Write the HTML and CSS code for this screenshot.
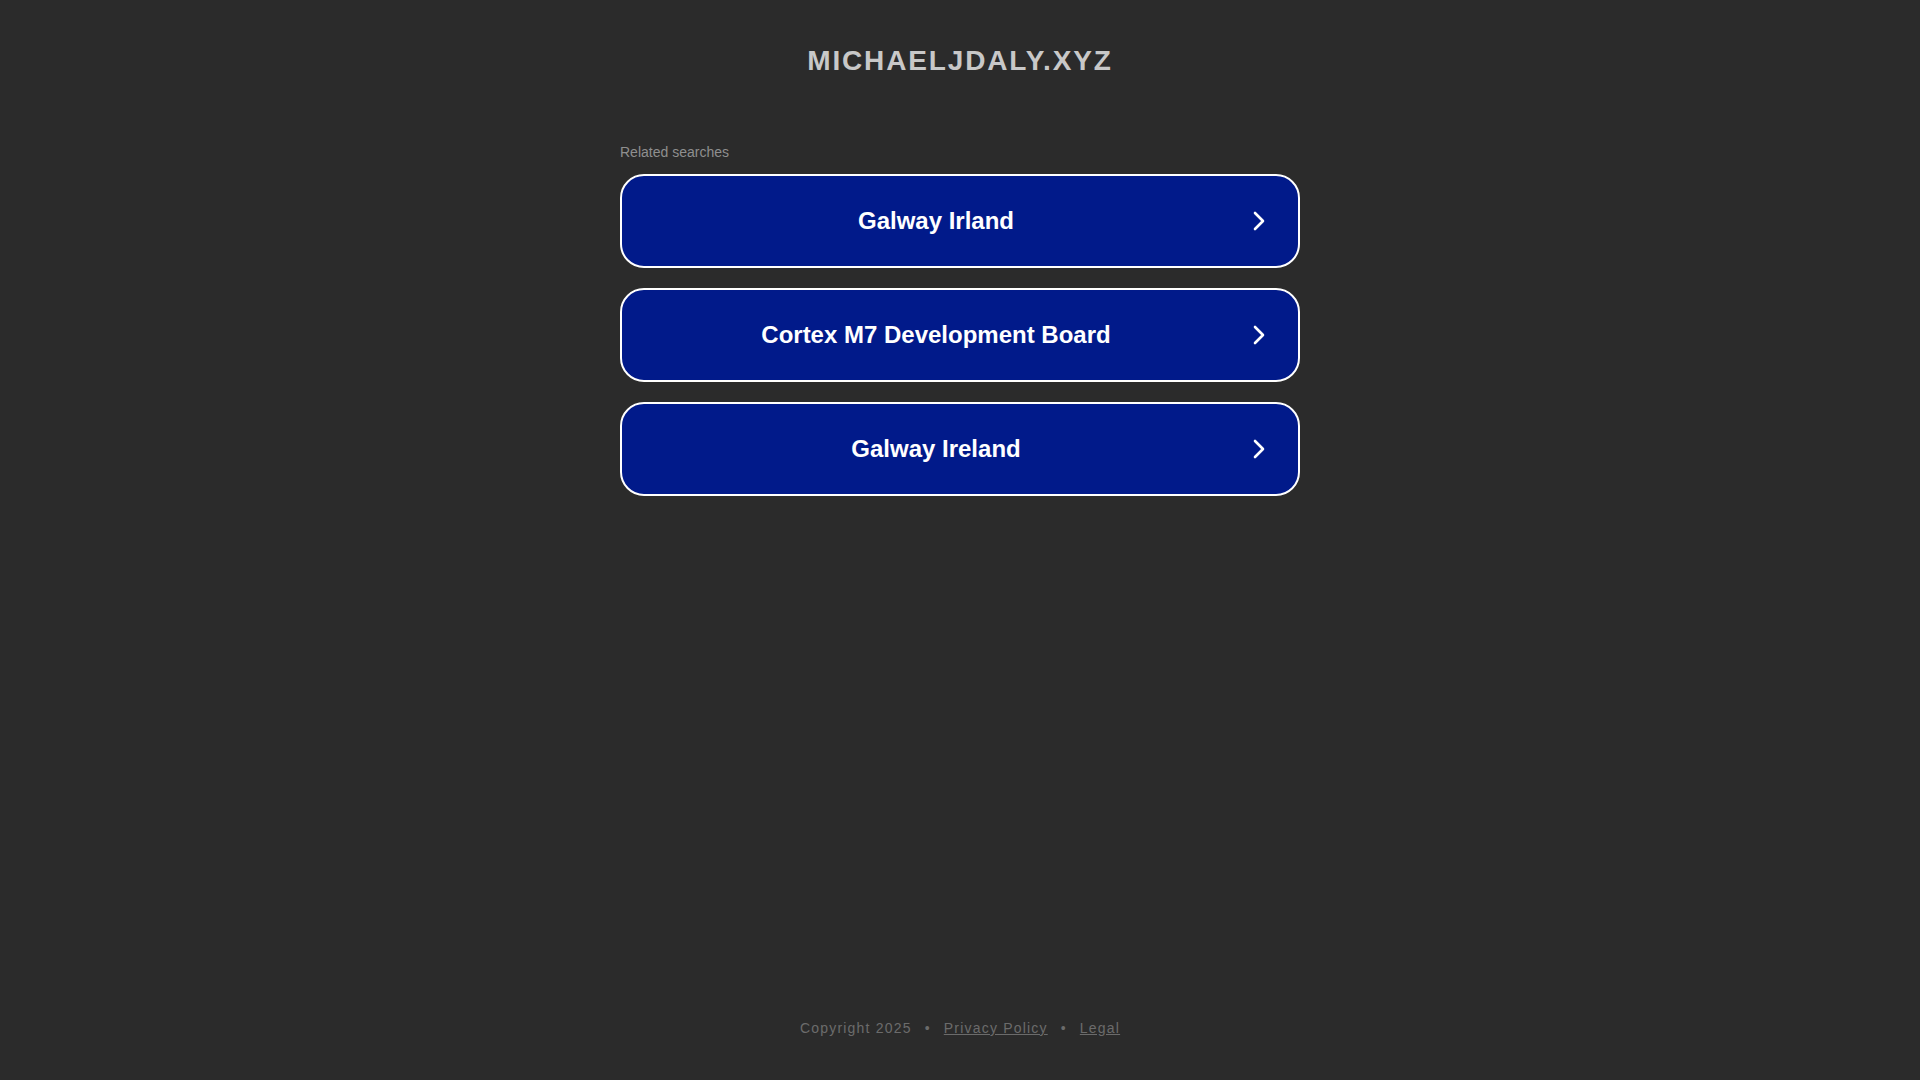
FILE: index.html
```html
<!DOCTYPE html>
<html lang="en">
<head>
<meta charset="utf-8">
<title>michaeljdaly.xyz</title>
<link rel="stylesheet" href="styles.css">
</head>
<body>
<div class="page">
  <header class="header">
    <h1 class="domain">MICHAELJDALY.XYZ</h1>
  </header>
  <main class="main">
    <section class="related">
      <div class="related-title">Related searches</div>
      <ul class="links">
        <li><a class="link" href="#"><span class="link-text">Galway Irland</span><svg class="arrow" viewBox="0 0 12 20" width="12" height="20"><path d="M2 2 L10 10 L2 18" fill="none" stroke="#fff" stroke-width="2.6" stroke-linecap="round" stroke-linejoin="round"/></svg></a></li>
        <li><a class="link" href="#"><span class="link-text">Cortex M7 Development Board</span><svg class="arrow" viewBox="0 0 12 20" width="12" height="20"><path d="M2 2 L10 10 L2 18" fill="none" stroke="#fff" stroke-width="2.6" stroke-linecap="round" stroke-linejoin="round"/></svg></a></li>
        <li><a class="link" href="#"><span class="link-text">Galway Ireland</span><svg class="arrow" viewBox="0 0 12 20" width="12" height="20"><path d="M2 2 L10 10 L2 18" fill="none" stroke="#fff" stroke-width="2.6" stroke-linecap="round" stroke-linejoin="round"/></svg></a></li>
      </ul>
    </section>
  </main>
  <footer class="footer">
    <span>Copyright 2025</span>
    <span class="dot">•</span>
    <a href="#" class="flink">Privacy Policy</a>
    <span class="dot">•</span>
    <a href="#" class="flink">Legal</a>
  </footer>
</div>
</body>
</html>
```

FILE: styles.css
```css
html, body {
  margin: 0;
  padding: 0;
  background: #2b2b2b;
  font-family: Arial, "Liberation Sans", Helvetica, sans-serif;
}
.page {
  min-height: 1080px;
  display: flex;
  flex-direction: column;
}
.header {
  display: flex;
  justify-content: center;
  padding-top: 44px;
}
.domain {
  margin: 0;
  font-size: 28px;
  line-height: 34px;
  font-weight: bold;
  letter-spacing: 1.85px;
  color: #c8c8c8;
}
.main {
  flex: 1;
  display: flex;
  justify-content: center;
  padding-top: 65px;
}
.related {
  width: 680px;
}
.related-title {
  font-size: 14px;
  line-height: 18px;
  color: #8f8f8f;
  margin-bottom: 13px;
}
.links {
  list-style: none;
  margin: 0;
  padding: 0;
  display: flex;
  flex-direction: column;
  gap: 20px;
}
.link {
  box-sizing: border-box;
  height: 94px;
  display: flex;
  align-items: center;
  border: 2px solid #ffffff;
  border-radius: 24px;
  background: #011a8a;
  text-decoration: none;
  padding: 0 33px 0 17px;
}
.link-text {
  flex: 1;
  text-align: center;
  font-size: 24px;
  font-weight: bold;
  color: #ffffff;
}
.arrow {
  flex: none;
  display: block;
  margin-left: 20px;
}
.footer {
  display: flex;
  justify-content: center;
  align-items: center;
  gap: 12px;
  padding-bottom: 43px;
  font-size: 14px;
  line-height: 18px;
  letter-spacing: 1.2px;
  color: #6b6b6b;
}
.dot {
  padding: 0 1px;
}
.flink {
  color: #6b6b6b;
  text-decoration: underline;
}
```
